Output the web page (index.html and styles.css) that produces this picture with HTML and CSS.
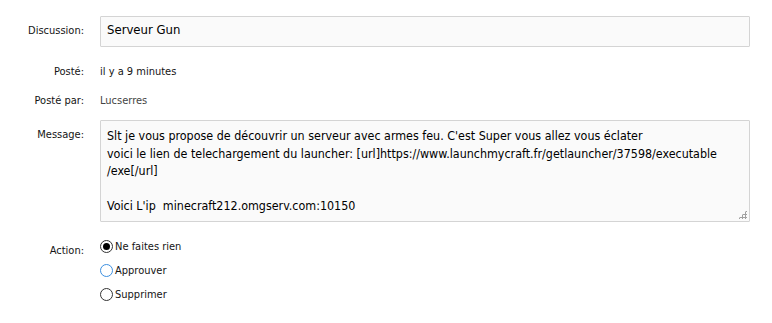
FILE: index.html
```html
<!DOCTYPE html>
<html lang="fr">
<head>
    <meta charset="UTF-8">
    <title>Modération</title>
    <link rel="stylesheet" href="styles.css">
</head>
<body>
    <form class="mod-form">
        <div class="form-row">
            <label class="form-label label-input">Discussion:</label>
            <div class="text-ctrl title-ctrl">Serveur Gun</div>
        </div>
        <div class="form-row">
            <span class="form-label">Posté:</span>
            <span class="form-value">il y a 9 minutes</span>
        </div>
        <div class="form-row">
            <span class="form-label">Posté par:</span>
            <span class="form-value muted">Lucserres</span>
        </div>
        <div class="form-row">
            <label class="form-label label-input">Message:</label>
            <div class="text-ctrl message-ctrl">Slt je vous propose de découvrir un serveur avec armes feu. C'est Super vous allez vous éclater
voici le lien de telechargement du launcher: [url]https://www.launchmycraft.fr/getlauncher/37598/executable
/exe[/url]

Voici L'ip  minecraft212.omgserv.com:10150<span class="grip"></span></div>
        </div>
        <div class="form-row action-row">
            <span class="form-label">Action:</span>
            <ul class="radio-list">
                <li><span class="radio checked"></span>Ne faites rien</li>
                <li><span class="radio focus"></span>Approuver</li>
                <li><span class="radio"></span>Supprimer</li>
            </ul>
        </div>
    </form>
</body>
</html>
```
FILE: styles.css
```css
body {
    margin: 0;
    background: #ffffff;
    color: #141414;
    font-family: "DejaVu Sans Condensed", "DejaVu Sans", sans-serif;
    font-size: 11px;
}

.mod-form {
    padding-top: 16px;
    width: 750px;
}

.form-row {
    display: grid;
    grid-template-columns: 84px 650px;
    column-gap: 16px;
    align-items: start;
}

.form-label {
    text-align: right;
    color: #141414;
    padding-top: 2px;
}

.label-input {
    padding-top: 8px;
}

.form-value {
    padding-top: 2px;
    height: 26.5px;
}

.muted {
    color: #444444;
}

.text-ctrl {
    box-sizing: border-box;
    border: 1px solid #d4d4d4;
    border-radius: 1px;
    background: #fafafa;
    color: #000000;
    font-size: 13px;
    padding: 5px 6px;
}

.title-ctrl {
    height: 31px;
    margin-bottom: 16px;
}

.message-ctrl {
    position: relative;
    height: 102px;
    font-size: 12.4px;
    line-height: 17.5px;
    padding-top: 6px;
    white-space: pre;
    margin-bottom: 12px;
}

.grip {
    position: absolute;
    right: 2px;
    bottom: 2px;
    width: 9px;
    height: 9px;
    background:
        radial-gradient(circle, #a0a0a0 1px, transparent 1.2px) 0 0 / 3px 3px;
    clip-path: polygon(100% 0, 100% 100%, 0 100%);
}

.radio-list {
    list-style: none;
    margin: 0;
    padding: 0;
}

.radio-list li {
    display: flex;
    align-items: center;
    height: 24px;
    font-size: 11px;
}

.radio {
    box-sizing: border-box;
    width: 13px;
    height: 13px;
    border: 1px solid #333333;
    border-radius: 50%;
    margin-right: 2px;
    background: #ffffff;
    position: relative;
}

.radio.checked::after {
    content: "";
    position: absolute;
    left: 2px;
    top: 2px;
    width: 7px;
    height: 7px;
    border-radius: 50%;
    background: #000000;
}

.radio.focus {
    border-color: #3c8fe0;
}

.action-row .form-label {
    padding-top: 10px;
}
```
